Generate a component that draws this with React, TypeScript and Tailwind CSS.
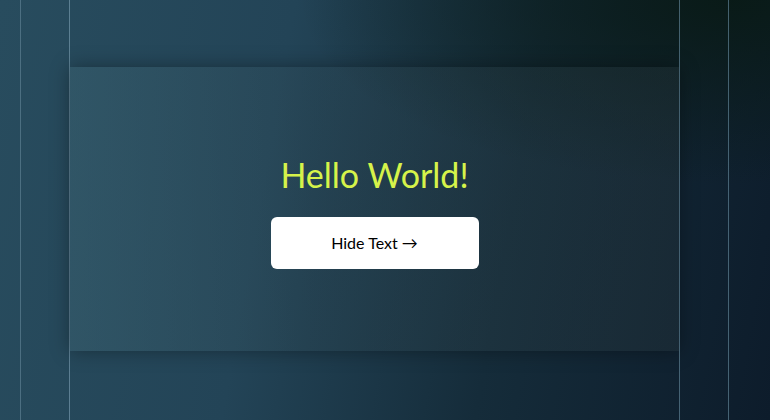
export default function App() {
  return (
    <div
      className="relative flex h-[420px] w-[770px] overflow-hidden bg-[linear-gradient(100deg,#284c5e_0%,#234457_35%,#152c3a_65%,#0d1c2b_100%)]"
      style={{ fontFamily: "Lato, 'Open Sans', sans-serif" }}
    >
      {/* tint: greenish dark up top-right */}
      <div className="pointer-events-none absolute inset-0 bg-[radial-gradient(ellipse_70%_55%_at_95%_0%,rgba(9,26,22,0.95),transparent_80%)]" />

      <div className="relative w-[21px] shrink-0 border-r border-[#5d7f92]/70" />
      <div className="relative w-[49px] shrink-0 border-r border-[#6a8ca0]/80" />

      <main className="relative flex flex-1 flex-col pt-[67px] pb-[69px]">
        <div className="flex flex-1 flex-col items-center justify-center gap-[22px] pt-[6px] bg-[linear-gradient(90deg,rgba(60,100,115,0.45),rgba(50,75,85,0.25)_40%,rgba(40,55,60,0.35))] shadow-[0_0_18px_rgba(0,0,0,0.35)]">
          <h1 className="text-[34px] leading-10 text-[#d6f34a]">Hello World!</h1>
          <button className="flex h-[52px] w-[208px] items-center justify-center rounded-md bg-white text-base text-black">
            Hide Text →
          </button>
        </div>
      </main>

      <div className="relative w-[49px] shrink-0 border-l border-[#5d7f92]/70" />
      <div className="relative w-[42px] shrink-0 border-l border-[#5d7f92]/70" />
    </div>
  );
}
